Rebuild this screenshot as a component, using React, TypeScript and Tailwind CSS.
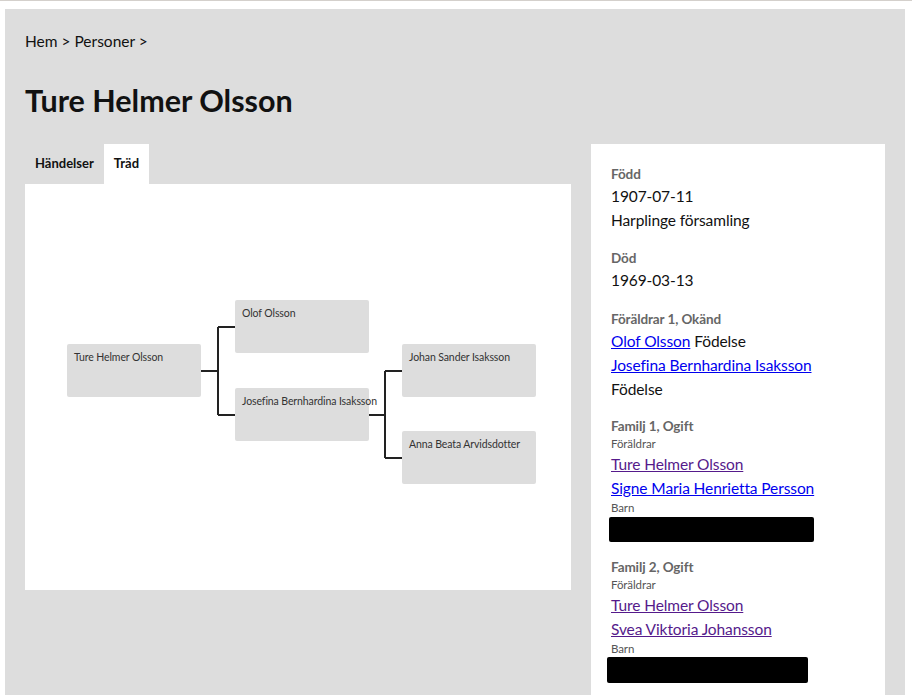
import React, { useState } from "react";

type TreeNode = { name: string; left: number; top: number };

const nodes: TreeNode[] = [
  { name: "Ture Helmer Olsson", left: 42, top: 160 },
  { name: "Olof Olsson", left: 210, top: 116 },
  { name: "Josefina Bernhardina Isaksson", left: 210, top: 204 },
  { name: "Johan Sander Isaksson", left: 377, top: 160 },
  { name: "Anna Beata Arvidsdotter", left: 377, top: 247 },
];

const FamilyTree: React.FC = () => (
  <div className="relative bg-white h-[406px]">
    <svg
      className="absolute inset-0 w-full h-full"
      viewBox="0 0 546 406"
      fill="none"
      stroke="#222"
      strokeWidth={2}
    >
      <path d="M176 187H193M193 143V231M193 143H210M193 231H210" />
      <path d="M344 231H360M360 187V274M360 187H377M360 274H377" />
    </svg>
    {nodes.map((n) => (
      <div
        key={n.name}
        className="absolute w-[134px] h-[53px] bg-[#dddddd] rounded-[2px] px-[7px] pt-[6px] text-[10.5px] leading-[14px] tracking-[-0.1px] whitespace-nowrap text-[#333]"
        style={{ left: n.left, top: n.top }}
      >
        {n.name}
      </div>
    ))}
  </div>
);

const Label: React.FC<{ children: React.ReactNode }> = ({ children }) => (
  <div className="text-[13.5px] leading-5 font-bold text-[#666]">{children}</div>
);

const Small: React.FC<{ children: React.ReactNode }> = ({ children }) => (
  <div className="text-[11.5px] leading-4 text-[#555]">{children}</div>
);

const Link: React.FC<{ visited?: boolean; children: React.ReactNode }> = ({ visited, children }) => (
  <a href="#" className={visited ? "underline text-[#551a8b]" : "underline text-[#0000ee]"}>
    {children}
  </a>
);

const Sidebar: React.FC = () => (
  <aside className="w-[294px] bg-white px-5 pt-5 pb-10 text-[15.5px] leading-6 tracking-[-0.1px] text-[#111]">
    <Label>Född</Label>
    <div>1907-07-11</div>
    <div>Harplinge församling</div>

    <div className="mt-4">
      <Label>Död</Label>
      <div>1969-03-13</div>
    </div>

    <div className="mt-[17px]">
      <Label>Föräldrar 1, Okänd</Label>
      <div>
        <Link>Olof Olsson</Link> Födelse
      </div>
      <div>
        <Link>Josefina Bernhardina Isaksson</Link>
      </div>
      <div>Födelse</div>
    </div>

    <div className="mt-[15px]">
      <Label>Familj 1, Ogift</Label>
      <Small>Föräldrar</Small>
      <div>
        <Link visited>Ture Helmer Olsson</Link>
      </div>
      <div>
        <Link>Signe Maria Henrietta Persson</Link>
      </div>
      <Small>Barn</Small>
      <div className="h-6">
        <div className="-ml-[2px] mt-px w-[205px] h-[25px] bg-black rounded-[2px]" />
      </div>
    </div>

    <div className="mt-4">
      <Label>Familj 2, Ogift</Label>
      <Small>Föräldrar</Small>
      <div>
        <Link visited>Ture Helmer Olsson</Link>
      </div>
      <div>
        <Link visited>Svea Viktoria Johansson</Link>
      </div>
      <Small>Barn</Small>
      <div className="h-6">
        <div className="-ml-1 w-[201px] h-[26px] bg-black rounded-[2px]" />
      </div>
    </div>
  </aside>
);

export default function App() {
  const [tab, setTab] = useState("trad");

  return (
    <div className="min-h-[695px] bg-white border-t border-[#d4d0cc] pt-2 font-['Lato','Liberation_Sans',sans-serif] overflow-hidden">
      <div className="ml-[5px] w-[900px] min-h-[686px] bg-[#dddddd] p-5 text-[#111]">
        <nav className="text-[15.5px] leading-6">Hem &gt; Personer &gt;</nav>
        <h1 className="mt-[27px] text-[30.5px] leading-10 font-bold">Ture Helmer Olsson</h1>

        <div className="mt-6 flex gap-5 items-start">
          <div className="w-[546px]">
            <div className="flex h-10 text-[13px] font-bold">
              <button
                onClick={() => setTab("handelser")}
                className={tab === "handelser" ? "px-[10px] bg-white" : "px-[10px]"}
              >
                Händelser
              </button>
              <button
                onClick={() => setTab("trad")}
                className={tab === "trad" ? "px-[10px] bg-white" : "px-[10px]"}
              >
                Träd
              </button>
            </div>
            {tab === "trad" ? <FamilyTree /> : <div className="bg-white h-[406px]" />}
          </div>
          <Sidebar />
        </div>
      </div>
    </div>
  );
}
